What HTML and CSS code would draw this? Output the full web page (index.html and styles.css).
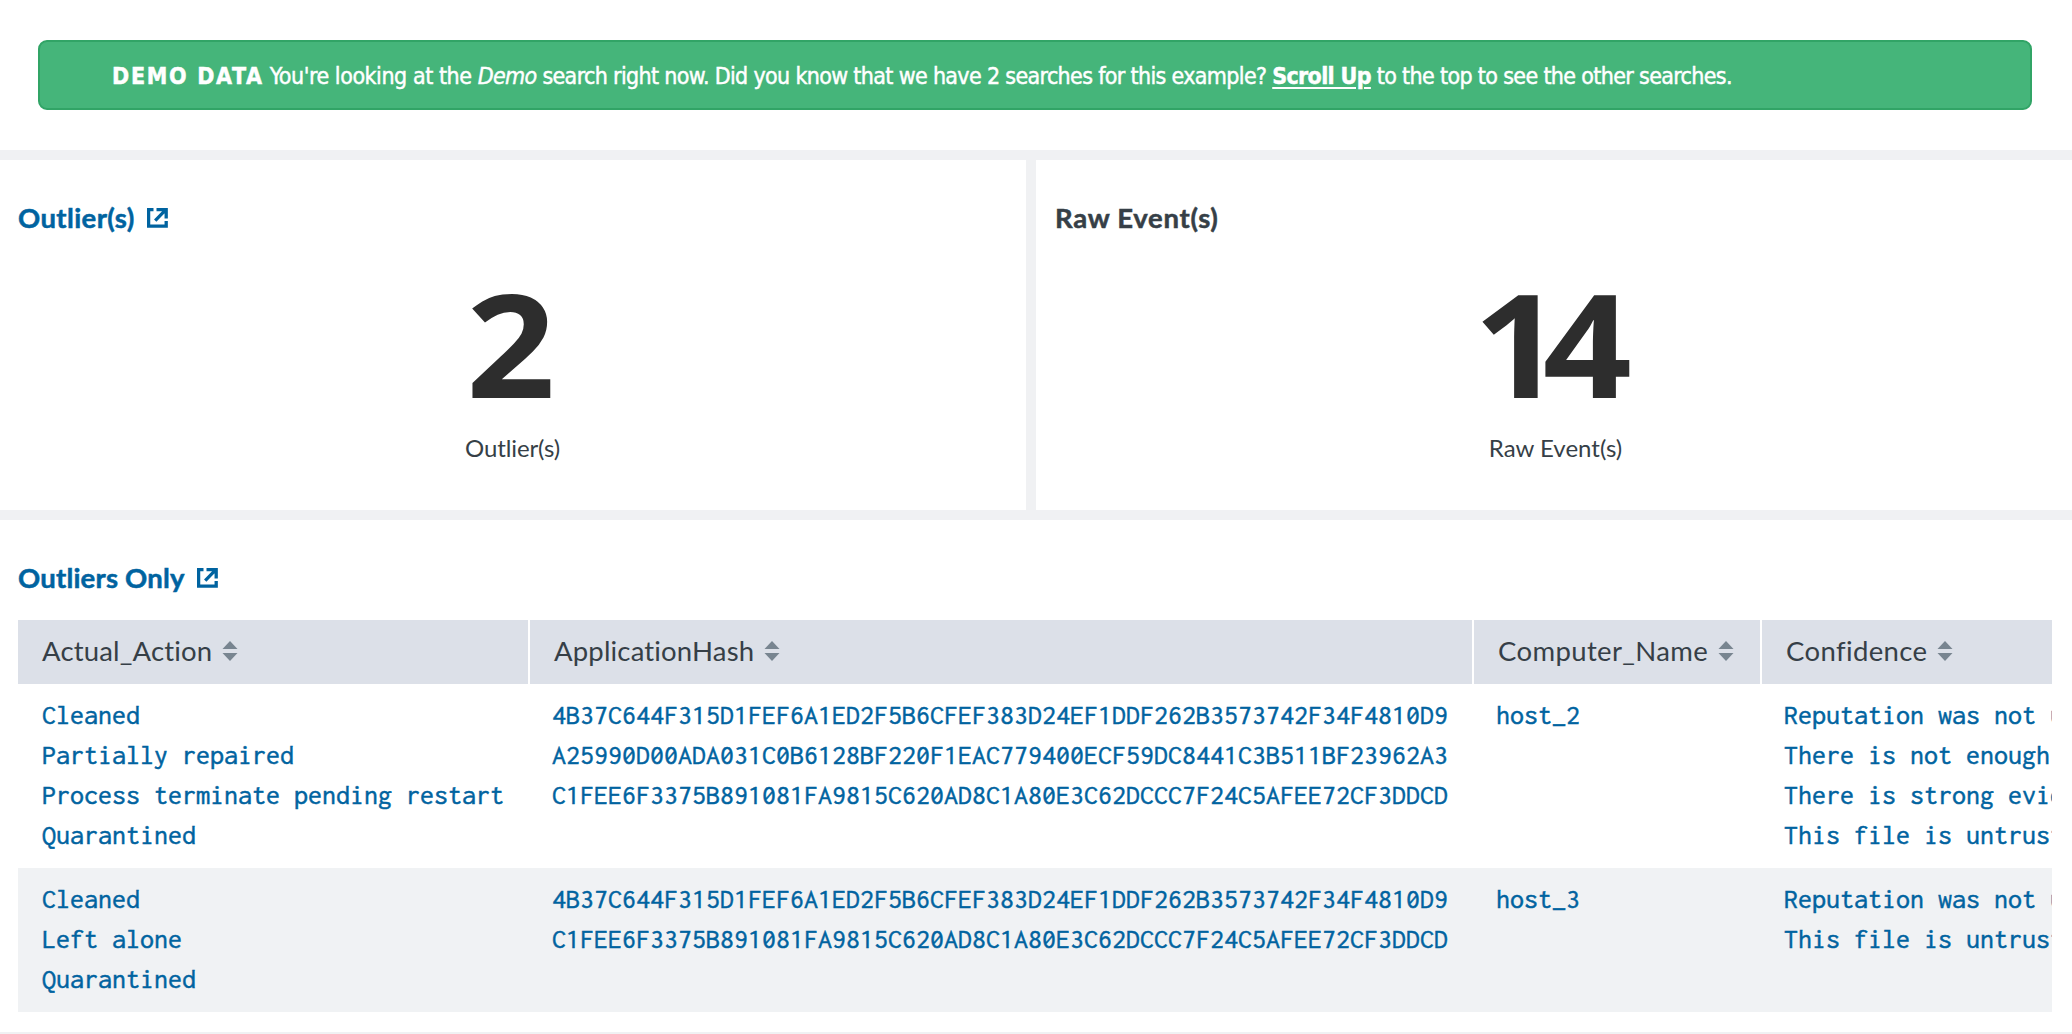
FILE: index.html
```html
<!DOCTYPE html>
<html lang="en">
<head>
<meta charset="utf-8">
<title>Demo search results</title>
<link rel="stylesheet" href="styles.css">
</head>
<body>
<svg class="defs" aria-hidden="true">
  <symbol id="external" viewBox="0 0 21 20">
    <path d="M6.5 1.6H1.6V18.2H19.2V13M9.5 1.6H19.2V10.5M18.4 2.2L8.2 12.6" fill="none" stroke="currentColor" stroke-width="3.3"/>
  </symbol>
  <symbol id="sort" viewBox="0 0 16 20">
    <path d="M8 0L15.5 8H.5Z M.5 12H15.5L8 20Z"/>
  </symbol>
</svg>

<section class="notice">
  <div class="banner"><strong class="tag">DEMO DATA</strong> <span class="lead">You're looking at the </span><em>Demo</em> search right now. Did you know that we have 2 searches for this example? <a class="scroll" href="#">Scroll Up</a> to the top to see the other searches.</div>
</section>

<section class="metrics">
  <article class="panel">
    <h2 class="title link outlier">Outlier(s)<svg class="ext"><use href="#external"/></svg></h2>
    <div class="value">2</div>
    <div class="caption outlier-caption">Outlier(s)</div>
  </article>
  <article class="panel raw">
    <h2 class="title raw-title">Raw Event(s)</h2>
    <div class="value pair">14</div>
    <div class="caption">Raw Event(s)</div>
  </article>
</section>

<section class="results">
  <h2 class="title link">Outliers Only<svg class="ext"><use href="#external"/></svg></h2>
  <div class="table">
    <div class="row head">
      <div class="cell">Actual_Action<svg class="sort"><use href="#sort"/></svg></div>
      <div class="cell">ApplicationHash<svg class="sort"><use href="#sort"/></svg></div>
      <div class="cell wide">Computer_Name<svg class="sort"><use href="#sort"/></svg></div>
      <div class="cell wide">Confidence<svg class="sort"><use href="#sort"/></svg></div>
    </div>
    <div class="row">
      <div class="cell"><div>Cleaned</div><div>Partially repaired</div><div>Process terminate pending restart</div><div>Quarantined</div></div>
      <div class="cell"><div>4B37C644F315D1FEF6A1ED2F5B6CFEF383D24EF1DDF262B3573742F34F4810D9</div><div>A25990D00ADA031C0B6128BF220F1EAC779400ECF59DC8441C3B511BF23962A3</div><div>C1FEE6F3375B891081FA9815C620AD8C1A80E3C62DCCC7F24C5AFEE72CF3DDCD</div></div>
      <div class="cell"><div>host_2</div></div>
      <div class="cell"><div>Reputation was not u</div><div>There is not enough</div><div>There is strong evid</div><div>This file is untrust</div></div>
    </div>
    <div class="row alt">
      <div class="cell"><div>Cleaned</div><div>Left alone</div><div>Quarantined</div></div>
      <div class="cell"><div>4B37C644F315D1FEF6A1ED2F5B6CFEF383D24EF1DDF262B3573742F34F4810D9</div><div>C1FEE6F3375B891081FA9815C620AD8C1A80E3C62DCCC7F24C5AFEE72CF3DDCD</div></div>
      <div class="cell"><div>host_3</div></div>
      <div class="cell"><div>Reputation was not u</div><div>This file is untrust</div></div>
    </div>
  </div>
</section>
</body>
</html>
```
FILE: styles.css
```css
* { box-sizing: border-box; }

body {
  margin: 0;
  height: 1034px;
  overflow: hidden;
  display: flex;
  flex-direction: column;
  gap: 10px;
  background: #f0f1f3;
  color: #363f47;
  font-family: Lato, Roboto, sans-serif;
  font-variant-ligatures: none;
}

.defs { display: none; }

.notice {
  height: 150px;
  padding: 40px 40px 0 38px;
  background: #fff;
}

.banner {
  height: 70px;
  padding: 0 72px;
  border: 2px solid #31a466;
  border-radius: 9px;
  background: #45b57a;
  color: #fff;
  font: 23px/68px "DejaVu Sans Condensed", "DejaVu Sans", sans-serif;
  font-stretch: condensed;
  letter-spacing: -0.66px;
  white-space: nowrap;
  -webkit-text-stroke: 0.45px;
}

.tag { letter-spacing: 1.7px; }
.lead { letter-spacing: -0.45px; }

.scroll { color: inherit; font-weight: 700; text-underline-offset: 3px; }

.metrics {
  display: grid;
  grid-template-columns: 1026px 1036px;
  gap: 10px;
  height: 350px;
}

.panel {
  display: flex;
  flex-direction: column;
  align-items: center;
  padding: 39px 19px 0 18px;
  background: #fff;
}

.raw { padding: 39px 16px 0 19px; }

.title {
  display: flex;
  align-items: center;
  align-self: flex-start;
  gap: 12px;
  height: 38px;
  margin: 0;
  font-size: 27.5px;
  line-height: 38px;
  letter-spacing: 0.2px;
  -webkit-text-stroke: 0.5px;
}

.raw-title { letter-spacing: 0.7px; }
.outlier { letter-spacing: 0.4px; }

.link { color: #0063a0; }

.ext { width: 21px; height: 20px; }

.value {
  height: 144px;
  margin: 34px 3px 0 0;
  color: #2d2d2d;
  font: 750 143px/144px "Open Sans", sans-serif;
  transform: scaleX(1.09);
}

.pair { margin-right: 26px; letter-spacing: -18px; }

.caption {
  margin-top: 17px;
  font-size: 24px;
  line-height: 32px;
}

.outlier-caption { letter-spacing: -0.1px; }

.results {
  height: 512px;
  padding: 39px 20px 0 18px;
  background: #fff;
}

.table {
  margin-top: 23px;
  overflow: hidden;
}

.row {
  display: grid;
  grid-template-columns: 512px 944px 288px 290px;
}

.row > .cell {
  overflow: hidden;
  padding: 11px 0 13px 22px;
  color: #0063a0;
  font: 28px/40px Inconsolata, "DejaVu Sans Mono", monospace;
  white-space: nowrap;
  -webkit-text-stroke: 0.5px;
}

.row > .cell:first-child { padding-left: 24px; }

.head > .cell,
.head > .cell:first-child {
  display: flex;
  align-items: center;
  gap: 10px;
  height: 64px;
  padding: 0 0 3px 24px;
  border-right: 2px solid #fff;
  background: #dce0e8;
  color: #363f47;
  font: 27.5px/38px Lato, Roboto, sans-serif;
  letter-spacing: 0.17px;
  -webkit-text-stroke: 0;
}

.head > .wide { letter-spacing: 0.37px; }
.head > .cell:last-child { border-right: 0; }

.sort { width: 16px; height: 20px; fill: #788590; }

.alt { background: #f0f2f4; }
```
